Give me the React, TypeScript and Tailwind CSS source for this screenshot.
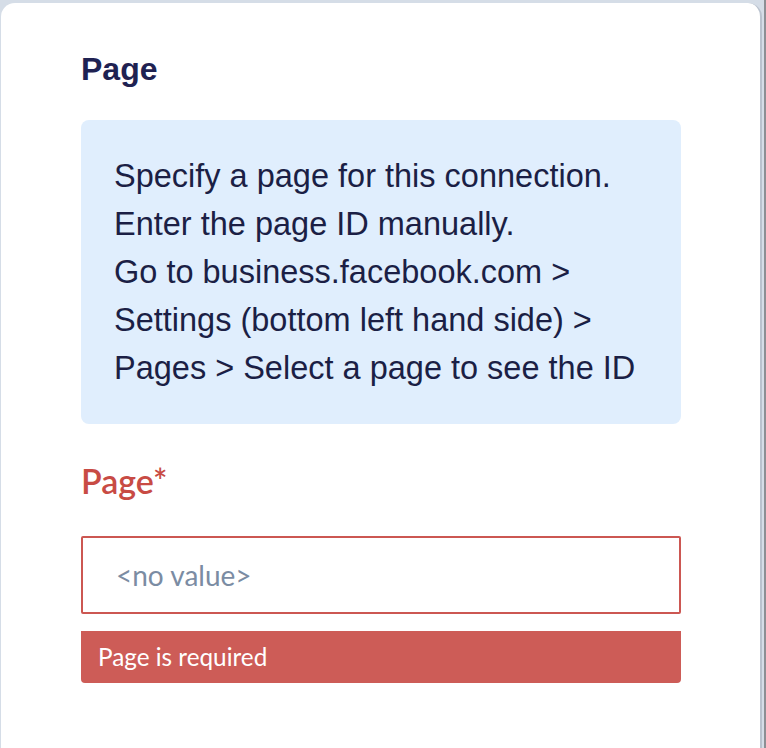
export default function App() {
  return (
    <div className="min-h-[748px] w-[766px] bg-[#d5dde7] pt-[3px] pl-[1px] pr-[2px] border-r-2 border-[#8c8f94]">
      <div className="min-h-[745px] rounded-t-[14px] bg-white border-r-2 border-[#b9c2ce] pl-[80px] pr-[79px] pt-[47px] font-['Liberation_Sans',Arial,sans-serif]">
        <h2 className="text-[32px] leading-[38px] font-bold text-[#1f2252]">Page</h2>

        <div className="mt-[32px] rounded-[8px] bg-[#e0eefd] px-[33px] py-[32px] text-[32.5px] leading-[48px] text-[#1b1f45]">
          <p>Specify a page for this connection.</p>
          <p>Enter the page ID manually.</p>
          <p>Go to business.facebook.com &gt;</p>
          <p>Settings (bottom left hand side) &gt;</p>
          <p>Pages &gt; Select a page to see the ID</p>
        </div>

        <label className="mt-[36px] block font-['Lato',sans-serif] text-[34px] leading-[42px] font-semibold text-[#c84b44]">
          Page*
        </label>

        <div className="mt-[34px] flex h-[78px] items-center rounded-[2px] border-2 border-[#cc5752] px-[33px]">
          <span className="font-['Lato',sans-serif] text-[28px] text-[#7b8ca3]">&lt;no value&gt;</span>
        </div>

        <div className="mt-[17px] flex h-[52px] items-center rounded-b-[4px] bg-[#cd5c57] px-[17px]">
          <span className="font-['Lato',sans-serif] text-[24.3px] text-white">Page is required</span>
        </div>
      </div>
    </div>
  )
}
